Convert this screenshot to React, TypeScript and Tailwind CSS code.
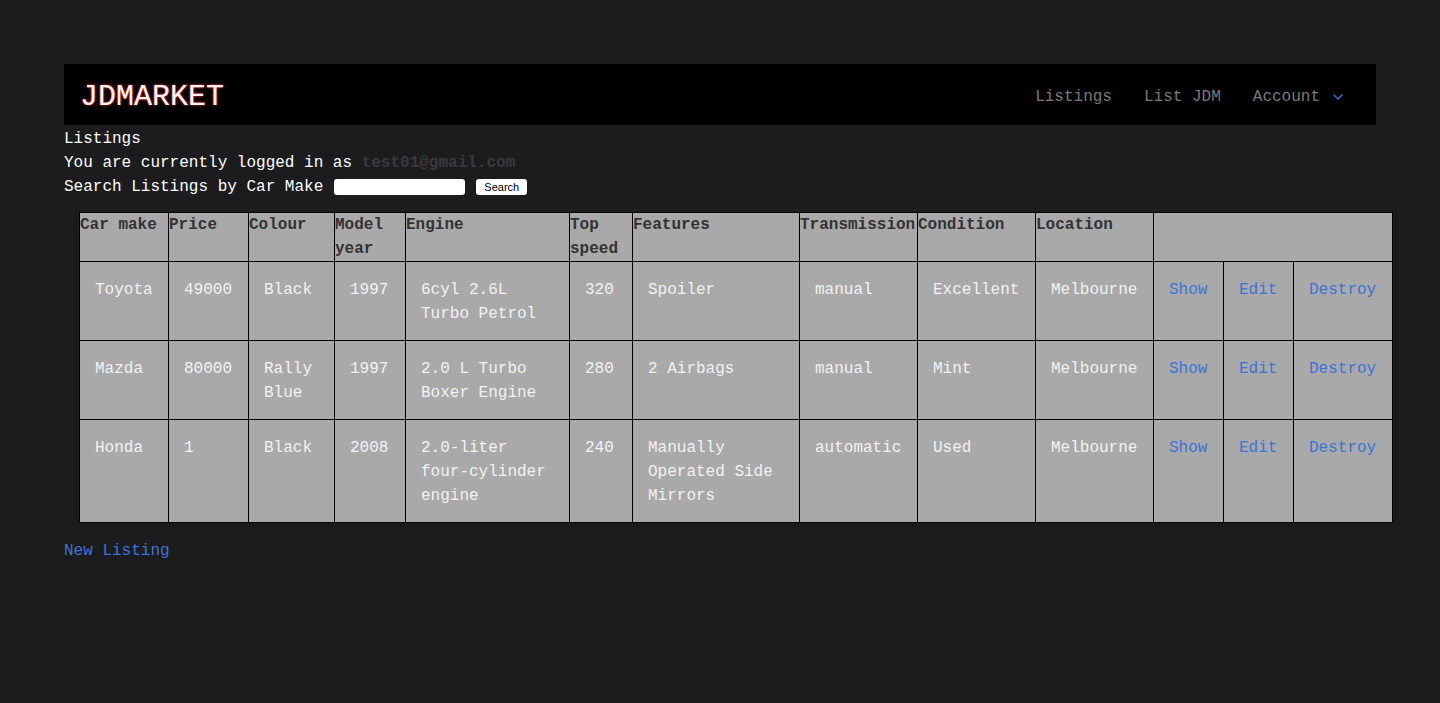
import { ChevronDown } from "lucide-react";

type Listing = {
    make: string;
    price: string;
    colour: string;
    year: string;
    engine: string;
    speed: string;
    features: string;
    transmission: string;
    condition: string;
    location: string;
};

const listings: Listing[] = [
    { make: "Toyota", price: "49000", colour: "Black", year: "1997", engine: "6cyl 2.6L Turbo Petrol", speed: "320", features: "Spoiler", transmission: "manual", condition: "Excellent", location: "Melbourne" },
    { make: "Mazda", price: "80000", colour: "Rally Blue", year: "1997", engine: "2.0 L Turbo Boxer Engine", speed: "280", features: "2 Airbags", transmission: "manual", condition: "Mint", location: "Melbourne" },
    { make: "Honda", price: "1", colour: "Black", year: "2008", engine: "2.0-liter four-cylinder engine", speed: "240", features: "Manually Operated Side Mirrors", transmission: "automatic", condition: "Used", location: "Melbourne" },
];

const widths = [89, 80, 86, 71, 164, 63, 167, 118, 118, 118, 70, 70, 99];

const headers = ["Car make", "Price", "Colour", "Model year", "Engine", "Top speed", "Features", "Transmission", "Condition", "Location"];

const td = "border border-black px-[15px] pt-[16px] pb-[14px] align-top text-[#f2f2f2]";
const linkTd = "border border-black px-[15px] pt-[16px] pb-[14px] align-top text-[#3b74d8]";

export default function App() {
    return (
        <div className="min-h-[703px] bg-[#1c1c1e] px-16 pt-16 font-['Liberation_Mono',monospace] text-base leading-6 text-white">
            <nav className="flex h-[61px] items-center justify-between bg-black pt-[4px] pl-4 pr-[30px]">
                <span className="text-[30px] text-[#fff2f0] [text-shadow:0_0_3px_#a3201a,0_0_2px_#d9302a]">JDMARKET</span>
                <div className="flex items-center gap-8 pt-[1px] text-[#7a7a7a]">
                    <span>Listings</span>
                    <span>List JDM</span>
                    <span className="flex items-center gap-[10px]">
                        Account
                        <ChevronDown className="h-4 w-4 text-[#3b74d8]" strokeWidth={2} />
                    </span>
                </div>
            </nav>

            <div className="pt-[2px]">
                <p>Listings</p>
                <p>
                    You are currently logged in as <span className="font-bold text-[#3a3a3c]">test01@gmail.com</span>
                </p>
                <div className="flex items-center">
                    <span>Search Listings by Car Make</span>
                    <input type="text" className="ml-[11px] h-4 w-[131px] rounded-[3px] bg-white" />
                    <button className="ml-[11px] h-4 w-[51px] rounded-[3px] bg-white font-['Liberation_Sans',sans-serif] text-[11px] leading-4 text-black">Search</button>
                </div>
            </div>

            <table className="mt-[13px] ml-[15px] table-fixed border-collapse border border-black bg-[#a9a9a9]" style={{ width: 1314 }}>
                <colgroup>
                    {widths.map((w, i) => (
                        <col key={i} style={{ width: w }} />
                    ))}
                </colgroup>
                <thead>
                    <tr>
                        {headers.map((h) => (
                            <th key={h} className="border border-black p-0 text-left align-top font-bold text-[#333]">{h}</th>
                        ))}
                        <th colSpan={3} className="border border-black p-0"></th>
                    </tr>
                </thead>
                <tbody>
                    {listings.map((l) => (
                        <tr key={l.make}>
                            <td className={td}>{l.make}</td>
                            <td className={td}>{l.price}</td>
                            <td className={td}>{l.colour}</td>
                            <td className={td}>{l.year}</td>
                            <td className={td}>{l.engine}</td>
                            <td className={td}>{l.speed}</td>
                            <td className={td}>{l.features}</td>
                            <td className={td}>{l.transmission}</td>
                            <td className={td}>{l.condition}</td>
                            <td className={td}>{l.location}</td>
                            <td className={linkTd}>Show</td>
                            <td className={linkTd}>Edit</td>
                            <td className={linkTd}>Destroy</td>
                        </tr>
                    ))}
                </tbody>
            </table>

            <p className="mt-4 text-[#3b74d8]">New Listing</p>
        </div>
    );
}
